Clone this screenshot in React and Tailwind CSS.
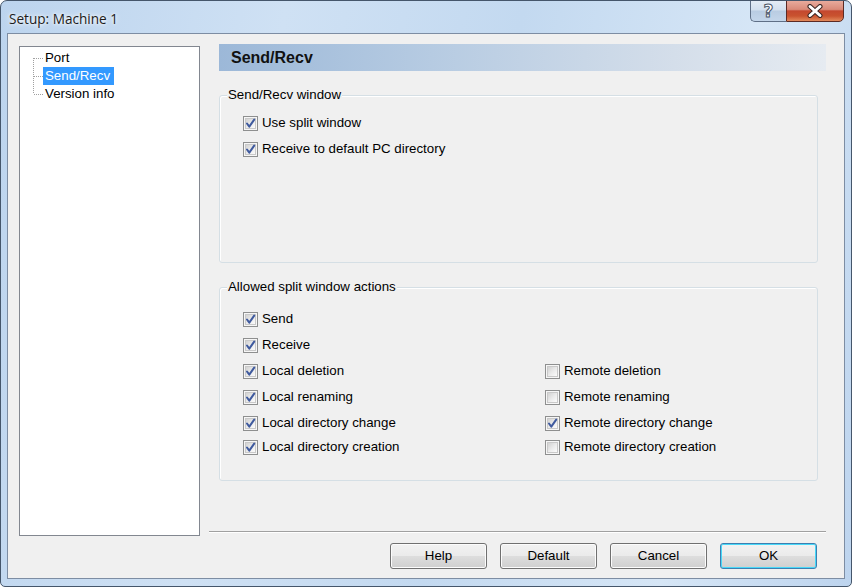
import React from "react";

const Check = ({ checked }) => (
  <span className="relative w-[15px] h-[15px] border border-[#8e8f8f] bg-[#f6f6f6] p-[1px] shrink-0 flex">
    <span className="flex-1 border border-[#c9c9c9] bg-[linear-gradient(135deg,#d2d2d2,#ececec_55%,#fbfbfb)]" />
    {checked && (
      <svg className="absolute inset-0" width="13" height="13" viewBox="0 0 13 13">
        <path d="M3 6.5 L5.3 9.6 L10.2 2.6" fill="none" stroke="#3f5a9e" strokeWidth="2" strokeLinecap="round" strokeLinejoin="round" />
      </svg>
    )}
  </span>
);

const Item = ({ checked, label }) => (
  <div className="flex items-center gap-[4px]">
    <Check checked={checked} />
    <span>{label}</span>
  </div>
);

const Btn = ({ label, def }) => (
  <button
    className={
      "w-[97px] h-[26px] rounded-[3px] border text-[13.3px] text-black flex items-center justify-center " +
      (def
        ? "border-[#3c7fb1] shadow-[inset_0_0_0_1px_#48d8f8] bg-[linear-gradient(to_bottom,#f2f2f2_0%,#ebebeb_48%,#dddddd_52%,#cfcfcf_100%)]"
        : "border-[#707070] shadow-[inset_0_0_0_1px_#fcfcfc] bg-[linear-gradient(to_bottom,#f2f2f2_0%,#ebebeb_48%,#dddddd_52%,#cfcfcf_100%)]")
    }
  >
    {label}
  </button>
);

export default function App() {
  return (
    <div className="w-[852px] h-[587px] bg-white">
      <div className="w-[852px] h-[587px] rounded-t-[7px] rounded-b-[5px] border border-[#45566b] bg-[linear-gradient(100deg,#bcd4ee_0%,#cfe1f4_30%,#c3d9f0_55%,#d6e6f6_80%,#bdd4ee_100%)] flex flex-col overflow-hidden font-['Liberation_Sans',Arial,sans-serif]">
        {/* title bar */}
        <div className="h-[32px] flex justify-between shrink-0">
          <div className="pl-[8px] pt-[8px] font-['Open_Sans',sans-serif] text-[13.6px] text-[#1b1b1b] leading-[20px] [text-shadow:0_0_6px_#ffffff,0_0_3px_#ffffff]">
            Setup: Machine 1
          </div>
          <div className="flex mr-[7px] h-[22px] -mt-px">
            <div className="w-[36px] h-full rounded-bl-[5px] border border-[#5f6f86] border-r-0 bg-[linear-gradient(to_bottom,#e4ecf5_0%,#d3e0ee_45%,#b9cce2_50%,#c4d6ea_100%)] flex items-center justify-center">
              <span className="font-['DejaVu_Sans',sans-serif] font-bold text-[17px] leading-none text-white [-webkit-text-stroke:1px_#4b5566]">?</span>
            </div>
            <div className="w-[58px] h-full rounded-br-[5px] border border-[#5b2a24] bg-[linear-gradient(to_bottom,#e8aa9c_0%,#d98a79_42%,#c4482f_50%,#c9532f_75%,#e28a5c_100%)] flex items-center justify-center">
              <svg width="18" height="14" viewBox="0 0 18 14">
                <path d="M4 2.5 L14 11.5 M14 2.5 L4 11.5" stroke="#3a2522" strokeWidth="5" strokeLinecap="round" />
                <path d="M4 2.5 L14 11.5 M14 2.5 L4 11.5" stroke="#ffffff" strokeWidth="3" strokeLinecap="round" />
              </svg>
            </div>
          </div>
        </div>

        {/* client */}
        <div className="mx-[6px] h-[546px] border border-[#7d8da3] bg-[#f0f0f0] flex text-[13.3px] text-black">
          {/* tree */}
          <div className="ml-[11px] mt-[12px] w-[181px] h-[490px] border border-[#828790] bg-white pt-[2px] flex items-start shrink-0">
            <svg width="23" height="54" viewBox="0 0 23 54" className="shrink-0">
              <path d="M13.5 9 V45 M14 9.5 H23 M14 27.5 H23 M14 45.5 H23" stroke="#a0a0a0" strokeWidth="1" strokeDasharray="1 1" fill="none" />
            </svg>
            <div className="flex flex-col">
              <div className="h-[18px] flex items-center pl-[2px]">Port</div>
              <div className="h-[18px] flex items-center px-[2px] bg-[#3399ff] text-white">Send/Recv</div>
              <div className="h-[18px] flex items-center pl-[2px]">Version info</div>
            </div>
          </div>

          {/* right column */}
          <div className="ml-[9px] mt-[10px] w-[617px] flex flex-col">
            <div className="ml-[10px] w-[607px] h-[27px] bg-[linear-gradient(to_right,#9cb8d8_0%,#b6cbe2_35%,#d4deea_75%,#e6ebf1_100%)] flex items-center pl-[12px]">
              <span className="font-bold text-[16px] text-[#111]">Send/Recv</span>
            </div>

            <div className="relative ml-[10px] mt-[24px] w-[599px] h-[168px] border border-[#d5dfe5] rounded-[3px] shadow-[inset_1px_1px_0_#ffffff] pl-[23px] pt-[14px]">
              <span className="absolute left-[7px] -top-[9px] px-[1px] bg-[#f0f0f0] leading-[16px]">Send/Recv window</span>
              <div className="h-[26px] flex items-center"><Item checked label="Use split window" /></div>
              <div className="h-[26px] flex items-center"><Item checked label="Receive to default PC directory" /></div>
            </div>

            <div className="relative ml-[10px] mt-[24px] w-[599px] h-[194px] border border-[#d5dfe5] rounded-[3px] shadow-[inset_1px_1px_0_#ffffff] pl-[23px] pt-[18px]">
              <span className="absolute left-[7px] -top-[9px] px-[1px] bg-[#f0f0f0] leading-[16px]">Allowed split window actions</span>
              <div className="grid grid-cols-[302px_1fr]">
                <div className="h-[26px] flex items-center"><Item checked label="Send" /></div>
                <div />
                <div className="h-[26px] flex items-center"><Item checked label="Receive" /></div>
                <div />
                <div className="h-[26px] flex items-center"><Item checked label="Local deletion" /></div>
                <div className="h-[26px] flex items-center"><Item label="Remote deletion" /></div>
                <div className="h-[26px] flex items-center"><Item checked label="Local renaming" /></div>
                <div className="h-[26px] flex items-center"><Item label="Remote renaming" /></div>
                <div className="h-[26px] flex items-center"><Item checked label="Local directory change" /></div>
                <div className="h-[26px] flex items-center"><Item checked label="Remote directory change" /></div>
                <div className="h-[22px] flex items-center"><Item checked label="Local directory creation" /></div>
                <div className="h-[22px] flex items-center"><Item label="Remote directory creation" /></div>
              </div>
            </div>

            <div className="mt-[50px] h-px bg-[#a0a0a0] border-b border-white box-content" />

            <div className="mt-[10px] flex justify-end gap-[13px] pr-[9px]">
              <Btn label="Help" />
              <Btn label="Default" />
              <Btn label="Cancel" />
              <Btn label="OK" def />
            </div>
          </div>
        </div>
      </div>
    </div>
  );
}
